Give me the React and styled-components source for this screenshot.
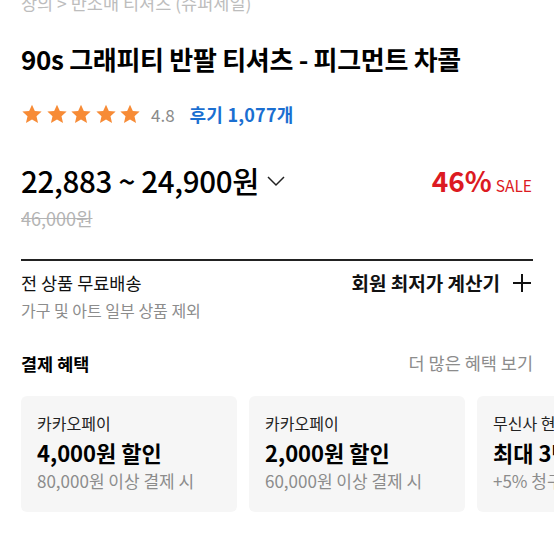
import React from 'react'
import styled, { createGlobalStyle } from 'styled-components'

const GlobalStyle = createGlobalStyle`
  html, body {
    margin: 0;
    padding: 0;
    background: #fff;
    overflow: hidden;
  }
  body {
    font-family: "Noto Sans CJK KR", "Noto Sans", sans-serif;
    color: #000;
  }
`

const Page = styled.div`
  width: 554px;
  height: 554px;
  overflow: hidden;
  padding: 0 21px;
  box-sizing: border-box;
`

const Breadcrumb = styled.div`
  margin-top: -9px;
  height: 24px;
  line-height: 24px;
  font-size: 17.5px;
  color: #bdbdbd;
  white-space: nowrap;
`

const Title = styled.h1`
  margin: 27px 0 0;
  font-size: 26px;
  line-height: 34px;
  font-weight: 700;
  letter-spacing: -0.3px;
  white-space: nowrap;
`

const RatingRow = styled.div`
  display: flex;
  align-items: center;
  margin-top: 26px;
  height: 24px;
`

const Stars = styled.div`
  display: flex;
  gap: 2.5px;
  margin-right: 10px;
`

const Score = styled.span`
  font-size: 17px;
  color: #8a8a8a;
  margin-right: 15px;
`

const Reviews = styled.span`
  font-size: 18px;
  font-weight: 700;
  color: #1b6fd1;
  letter-spacing: 0.2px;
`

const PriceRow = styled.div`
  display: flex;
  align-items: center;
  justify-content: space-between;
  margin-top: 36px;
  height: 36px;
`

const Price = styled.div`
  display: flex;
  align-items: center;
  font-size: 29.5px;
  letter-spacing: -0.3px;
  font-weight: 500;
`

const Chevron = styled.svg`
  margin-left: 7px;
  margin-top: 2px;
`

const Sale = styled.div`
  display: flex;
  align-items: baseline;
  color: #dc1a22;
  margin-right: 1px;
`

const SalePct = styled.span`
  font-size: 28px;
  font-weight: 700;
`

const SaleLabel = styled.span`
  font-size: 15.5px;
  margin-left: 4px;
`

const OldPrice = styled.div`
  margin-top: 8px;
  font-size: 18px;
  line-height: 24px;
  color: #b4b4b4;
  text-decoration: line-through;
`

const Divider = styled.div`
  margin-top: 29px;
  height: 2px;
  background: #222;
`

const ShippingRow = styled.div`
  display: flex;
  justify-content: space-between;
  align-items: center;
  margin-top: 9px;
  height: 26px;
`

const Label = styled.div`
  font-size: ${p => p.$size || 17.5}px;
  font-weight: ${p => (p.$bold ? 700 : 400)};
  color: ${p => (p.$muted ? '#8c8c8c' : '#111')};
  display: flex;
  align-items: center;
  line-height: 26px;
`

const Note = styled.div`
  margin-top: 3px;
  font-size: 16px;
  line-height: 22px;
  color: #8c8c8c;
`

const SectionHead = styled.div`
  display: flex;
  justify-content: space-between;
  align-items: center;
  margin-top: 29px;
  height: 26px;
`

const SectionTitle = styled.div`
  font-size: 17.5px;
  font-weight: 700;
`

const Cards = styled.div`
  display: flex;
  gap: 12px;
  margin-top: 20px;
  width: 800px;
`

const Card = styled.div`
  flex: 0 0 216px;
  height: 116px;
  background: #f6f6f6;
  border-radius: 6px;
  padding: 14px 16px 0;
  box-sizing: border-box;
  white-space: nowrap;
  overflow: hidden;
`

const CardName = styled.div`
  font-size: 16px;
  color: #222;
  line-height: 26px;
`

const CardValue = styled.div`
  font-size: 22px;
  font-weight: 700;
  line-height: 32px;
`

const CardCond = styled.div`
  font-size: 17px;
  color: #8c8c8c;
  line-height: 26px;
`

const Star = () => (
  <svg width="22" height="22" viewBox="0 0 24 24">
    <path
      d="M12 1.8l3.1 6.9 7.4.7-5.6 5 1.7 7.4L12 17.9l-6.6 3.9 1.7-7.4-5.6-5 7.4-.7z"
      fill="#f78b36"
    />
  </svg>
)

const benefits = [
  { name: '카카오페이', value: '4,000원 할인', cond: '80,000원 이상 결제 시' },
  { name: '카카오페이', value: '2,000원 할인', cond: '60,000원 이상 결제 시' },
  { name: '무신사 현대카드', value: '최대 3만원 할인', cond: '+5% 청구할인' }
]

export default function App () {
  return (
    <Page>
      <GlobalStyle />
      <Breadcrumb>상의 &gt; 반소매 티셔츠 (슈퍼세일)</Breadcrumb>
      <Title>90s 그래피티 반팔 티셔츠 - 피그먼트 차콜</Title>

      <RatingRow>
        <Stars>
          {[0, 1, 2, 3, 4].map(i => <Star key={i} />)}
        </Stars>
        <Score>4.8</Score>
        <Reviews>후기 1,077개</Reviews>
      </RatingRow>

      <PriceRow>
        <Price>
          22,883 ~ 24,900원
          <Chevron width="20" height="12" viewBox="0 0 20 12">
            <path d="M2 2l8 8 8-8" fill="none" stroke="#222" strokeWidth="1.5" />
          </Chevron>
        </Price>
        <Sale>
          <SalePct>46%</SalePct>
          <SaleLabel>SALE</SaleLabel>
        </Sale>
      </PriceRow>
      <OldPrice>46,000원</OldPrice>

      <Divider />

      <ShippingRow>
        <Label>전 상품 무료배송</Label>
        <Label $bold $size={19}>
          회원 최저가 계산기
          <svg width="22" height="22" viewBox="0 0 22 22" style={{ marginLeft: 11 }}>
            <path d="M11 2v18M2 11h18" stroke="#111" strokeWidth="2" />
          </svg>
        </Label>
      </ShippingRow>
      <Note>가구 및 아트 일부 상품 제외</Note>

      <SectionHead>
        <SectionTitle>결제 혜택</SectionTitle>
        <Label $muted $size={17.5}>더 많은 혜택 보기</Label>
      </SectionHead>

      <Cards>
        {benefits.map((b, i) => (
          <Card key={i}>
            <CardName>{b.name}</CardName>
            <CardValue>{b.value}</CardValue>
            <CardCond>{b.cond}</CardCond>
          </Card>
        ))}
      </Cards>
    </Page>
  )
}
